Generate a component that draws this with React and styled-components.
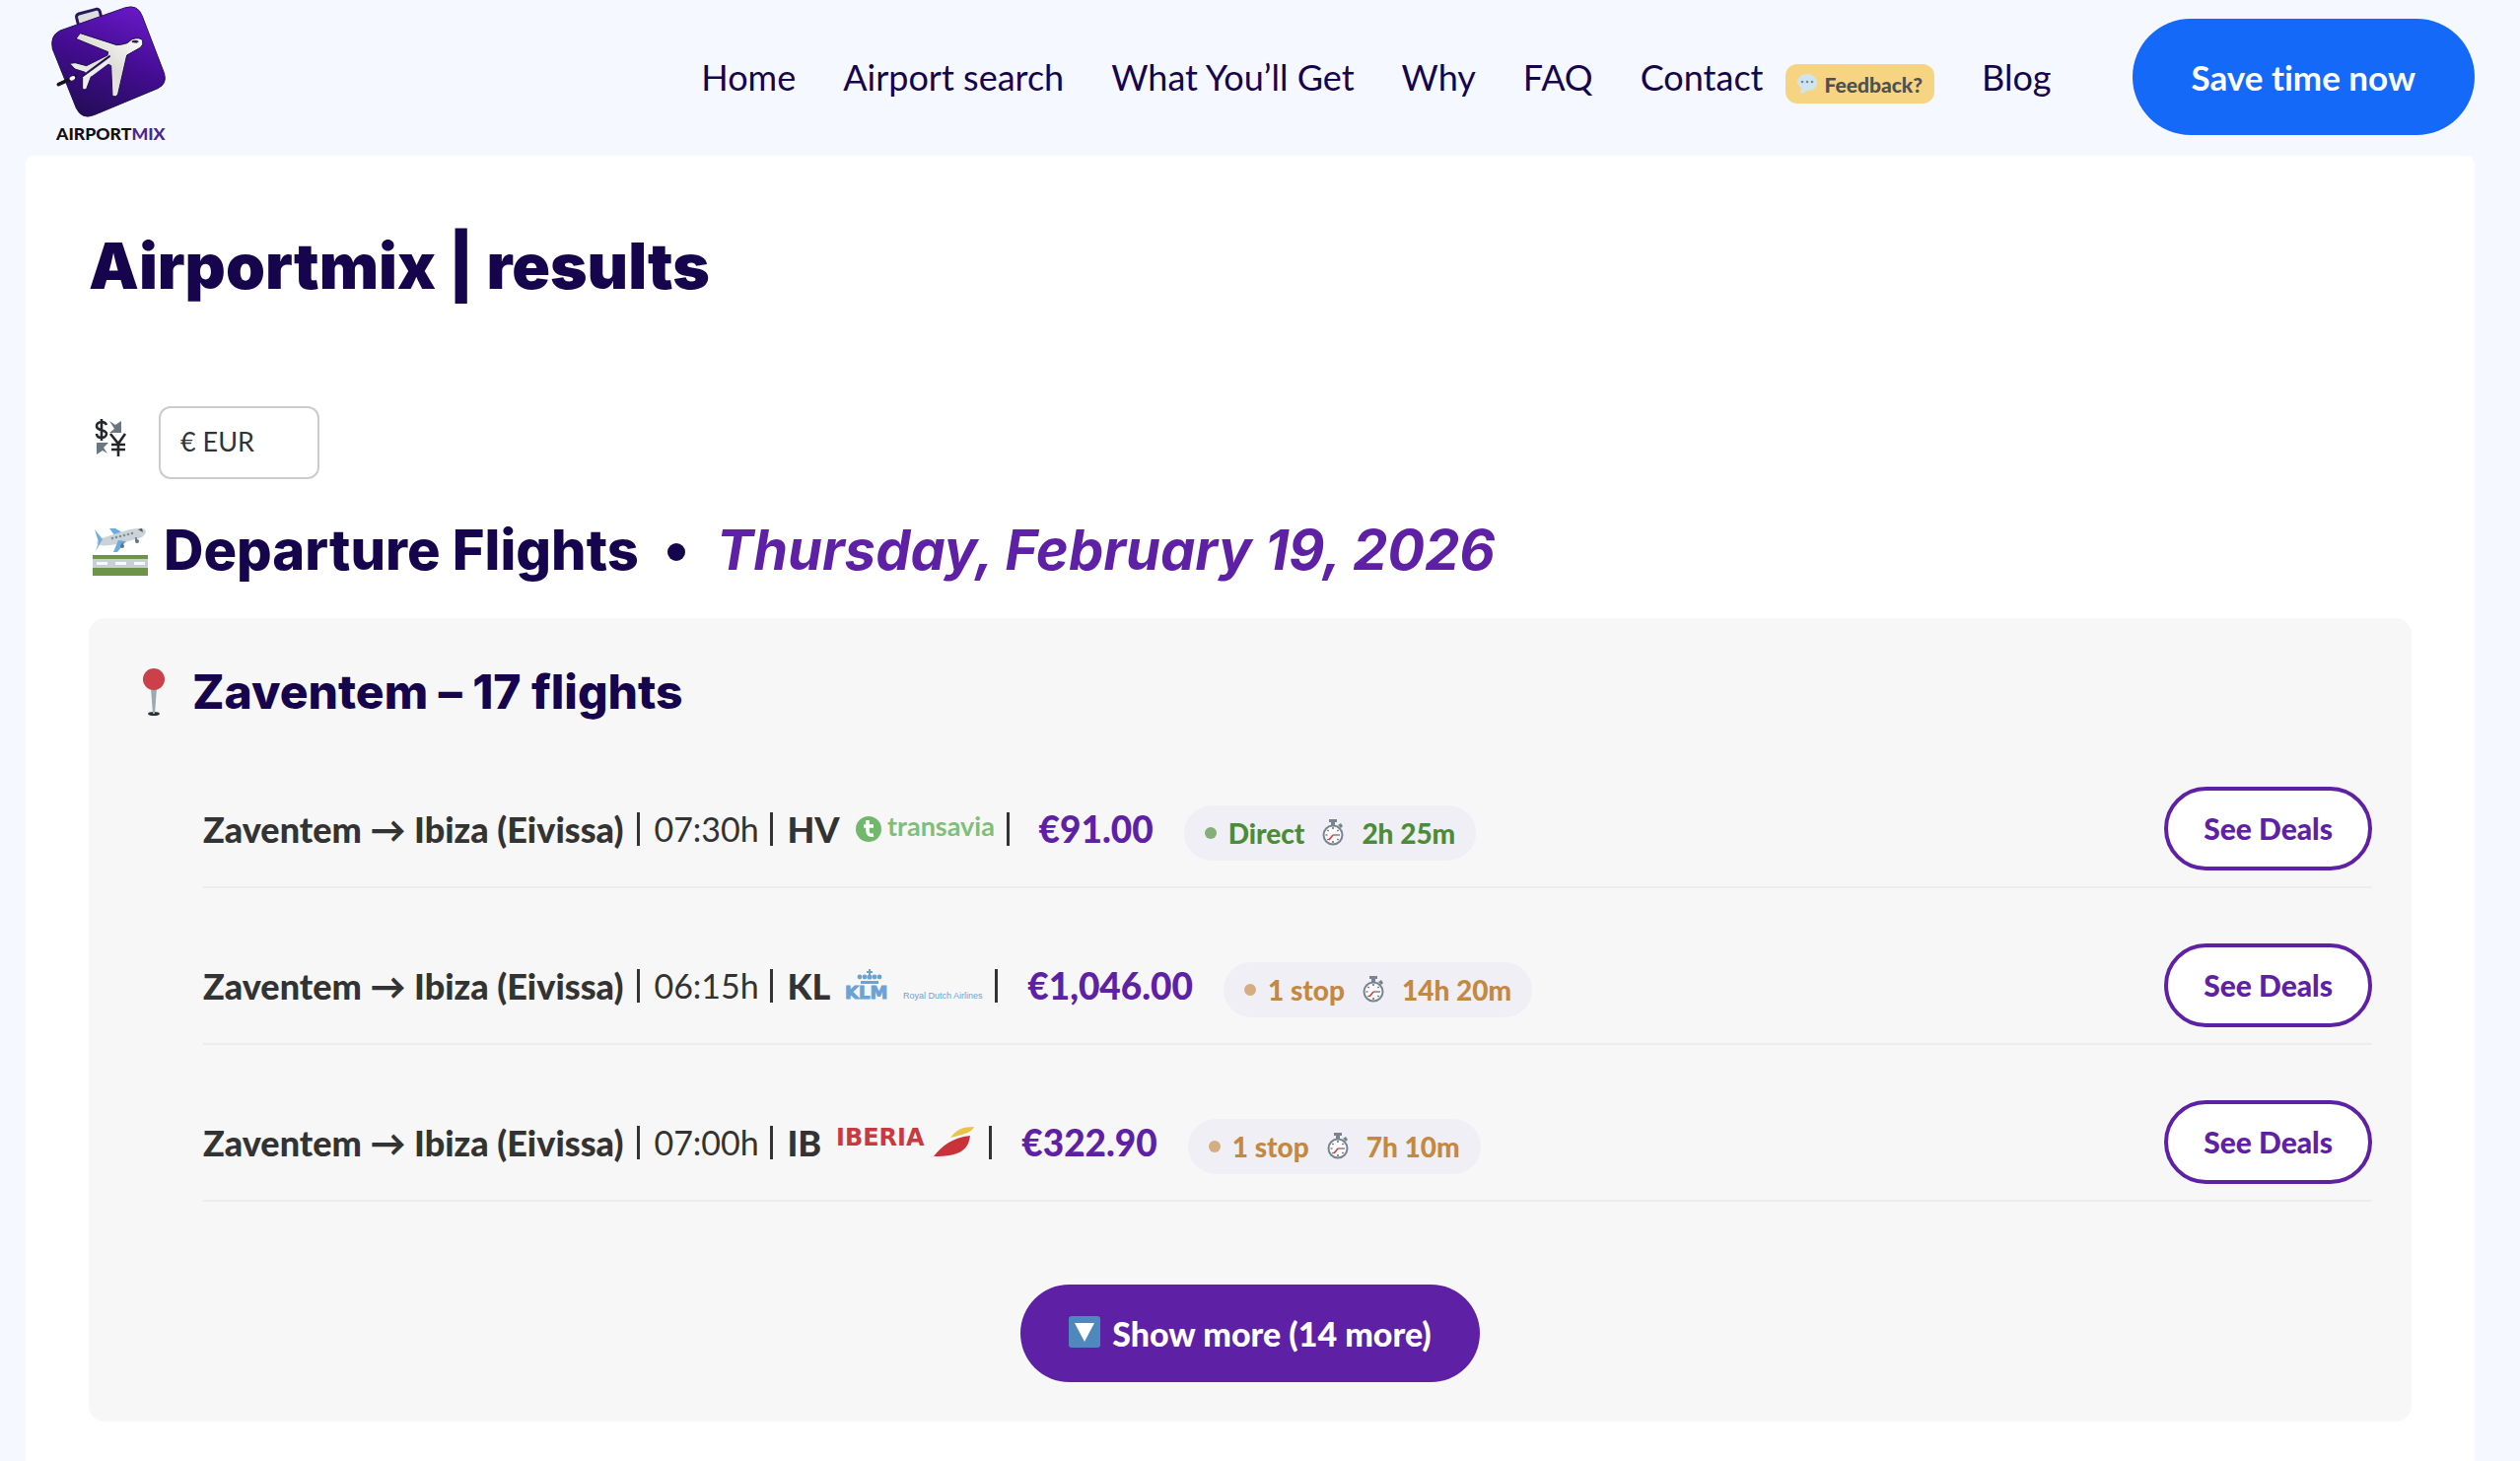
import React, { useState } from 'react'
import styled, { createGlobalStyle } from 'styled-components'

const GlobalStyle = createGlobalStyle`
* { box-sizing: border-box; }
body {
    margin: 0;
    background: #f5f8ff;
    color: #333;
    font-family: 'Lato', sans-serif;
}
body, button { font-variant-ligatures: none; }
svg { overflow: visible; flex: none; }
`

const Header = styled.header`
display: flex;
align-items: center;
height: 158px;
padding: 0 46px 2px 48px;
`

const LogoLink = styled.a`
display: block;
height: 142px;
margin: 0 auto 6px 0;
`

const Nav = styled.nav`
display: flex;
align-items: center;
gap: 48px;
margin-right: 82px;
`

const NavLink = styled.a`
color: #16054d;
font-size: 36px;
line-height: 48px;
text-decoration: none;
white-space: nowrap;
`

const ContactGroup = styled.div`
display: flex;
align-items: center;
gap: 22px;
`

const Feedback = styled.button`
display: flex;
align-items: center;
gap: 8px;
height: 40px;
margin-top: 14px;
padding: 0 12px;
border: 0;
border-radius: 12px;
background: #f6d481;
color: #505050;
font-family: inherit;
font-size: 21px;
font-weight: 900;
`

const SaveButton = styled.button`
height: 118px;
padding: 0 60px;
border: 0;
border-radius: 60px;
background: #1469f8;
color: white;
font-family: inherit;
font-size: 35px;
font-weight: 700;
white-space: nowrap;
`

const Main = styled.main`
margin: 0 46px 0 26px;
padding: 62px 64px 40px;
min-height: calc(100vh - 158px);
border-radius: 8px 8px 0 0;
background: white;
`

const Title = styled.h1`
margin: 0 0 92px;
color: #16054d;
font-family: 'Inter', sans-serif;
font-size: 64px;
font-weight: 900;
line-height: 100px;
`

const Currency = styled.label`
display: flex;
align-items: center;
gap: 33px;
padding-left: 6px;
margin-bottom: 32px;

svg { margin-bottom: 10px; }
`

const Select = styled.select`
appearance: none;
width: 163px;
height: 74px;
padding: 0 20px 4px;
border: 2px solid #ccc;
border-radius: 12px;
background: white;
color: #333;
font-family: inherit;
font-size: 27px;
`

const SectionTitle = styled.h2`
display: flex;
align-items: center;
margin: 0 0 29px;
padding-left: 4px;
color: #16054d;
font-family: 'Inter', sans-serif;
font-size: 56px;
font-weight: 800;
line-height: 80px;
white-space: nowrap;

svg { margin: 4px 16px 0 0; }
`

const Bullet = styled.span`
width: 18px;
height: 18px;
margin: 4px 32px 0 29px;
border-radius: 50%;
background: #16054d;
`

const FlightDate = styled.em`
color: #5e21a5;
font-weight: 700;
`

const Panel = styled.section`
padding: 40px;
border-radius: 16px;
background: #f7f7f7;
`

const AirportTitle = styled.h3`
display: flex;
align-items: center;
gap: 28px;
margin: 0;
padding-left: 15px;
color: #16054d;
font-family: 'Inter', sans-serif;
font-size: 48px;
font-weight: 800;
line-height: 70px;
`

const FlightList = styled.ul`
margin: 31px 0 84px;
padding: 0 0 0 76px;
list-style: none;
`

const FlightRow = styled.li`
display: flex;
align-items: center;
height: 159px;
padding: 42px 0 2px;
border-bottom: 2px solid #ededed;
font-size: 36px;
line-height: 44px;
white-space: nowrap;

&:first-child { height: 133px; padding-top: 16px; }
`

const Route = styled.strong`
min-width: 425px;
font-weight: 900;
`

const Time = styled.span`
width: 104px;
font-size: 34px;
`

const Divider = styled.span`
width: 3px;
height: 34px;
margin: 0 14px;
background: #333;
`

const Code = styled.strong`
margin-right: 15px;
font-weight: 900;
`

const Price = styled.strong`
margin: 0 31px 0 16px;
color: #5e21a5;
font-size: 37px;
font-weight: 900;
`

const Pill = styled.span`
display: flex;
align-items: center;
height: 56px;
margin-top: 8px;
padding: 0 21px;
border-radius: 28px;
background: #f0eff5;
color: ${props => props.$direct ? '#4c8c37' : '#c48840'};
font-size: 28px;
font-weight: 900;

svg { margin: 0 18px; }
`

const Dot = styled.span`
width: 12px;
height: 12px;
margin-right: 12px;
border-radius: 50%;
background: currentColor;
opacity: 0.65;
`

const DealsButton = styled.button`
height: 85px;
margin-left: auto;
padding: 0 36px 2px;
border: 4px solid #5e21a5;
border-radius: 43px;
background: white;
color: #5e21a5;
font-family: inherit;
font-size: 30px;
font-weight: 900;
`

const ShowMore = styled.button`
display: flex;
align-items: center;
gap: 12px;
height: 99px;
margin: 0 auto;
padding: 0 49px;
border: 0;
border-radius: 50px;
background: #5e21a5;
color: white;
font-family: inherit;
font-size: 34px;
font-weight: 900;

svg { margin-bottom: 4px; }
`

const Logo = () => (
    <svg width="124" height="142" viewBox="144 12 372 426" role="img" aria-label="Airportmix">
        <defs>
            <linearGradient id="bag" x1="0.75" y1="0" x2="0.35" y2="1">
                <stop offset="0" stopColor="#6819c8" />
                <stop offset="0.5" stopColor="#430c91" />
                <stop offset="1" stopColor="#240d58" />
            </linearGradient>
            <linearGradient id="jet" x1="1" y1="0" x2="0" y2="1">
                <stop offset="0" stopColor="#fff" />
                <stop offset="0.5" stopColor="#dcdbd6" />
                <stop offset="1" stopColor="#fff" />
            </linearGradient>
        </defs>
        <path d="M240 82 L233 54 Q231 45 240 42 L292 28 Q301 26 304 35 L308 52" fill="#dddde0" stroke="#281a5b" strokeWidth="9" />
        <path d="M183 93 L382 23 Q419 13 432 47 L500 224 Q509 255 480 269 L286 350 Q249 365 232 329 L160 149 Q151 109 183 93Z" fill="url(#bag)" stroke="#251158" strokeWidth="3" />
        <path d="M231 118 L244 101 L355 137 Q373 136 387 131 L402 119 Q426 112 434 123 Q438 136 427 145 L386 168 L359 286 Q355 297 342 292 L338 200 L326 194 L278 231 L264 268 Q258 278 251 268 L251 230 L259 220 L228 210 L212 193 L229 191 L263 200 L327 168 L329 158Z" fill="url(#jet)" stroke="#21104b" strokeWidth="3" />
        <path d="M402 124 Q413 119 423 126 L416 131 L401 129Z" fill="#30205c" />
        <path d="M250 233 L335 170" stroke="#251050" strokeWidth="6" />
        <path d="M251 236 L336 177 L329 194 L279 232Z" fill="#eee" />
        <path d="M178 257 L228 234" stroke="#171120" strokeWidth="11" strokeLinecap="round" />
        <ellipse cx="220" cy="238" rx="9" ry="6" fill="white" transform="rotate(-25 220 238)" />
        <text x="171" y="425" fontFamily="Lato, sans-serif" fontSize="53" fontWeight="900" fill="#111">AIRPORT<tspan fill="#4c2792">MIX</tspan></text>
    </svg>
)

const BubbleIcon = () => (
    <svg width="20" height="20" viewBox="0 0 20 20" aria-hidden="true">
        <path d="M10 0C16 0 20 4 20 9s-4 8-9 8c-3 0-3 3-9 3 2-2 2-4 2-6C1 12 0 10 0 8c0-5 5-8 10-8Z" fill="#d0e4ee" />
        <g fill="#6b8ca5"><circle cx="5" cy="8" r="1.3" /><circle cx="10" cy="8" r="1.3" /><circle cx="15" cy="8" r="1.3" /></g>
    </svg>
)

const ExchangeIcon = () => (
    <svg width="32" height="40" viewBox="0 0 32 40" aria-hidden="true">
        <path d="M12 7C11 4 9 4 7 4 4 4 2 6 2 8c0 6 10 3 10 8 0 3-3 4-5 4-3 0-5-1-5-4M7 1v22" fill="none" stroke="#24282c" strokeWidth="2.6" />
        <path d="M16 16l8 10 7-10M24 25v14M17 27h14M17 32h14" fill="none" stroke="#24282c" strokeWidth="2.6" />
        <path d="M15 3l6 4 6-4v12H15l5-4Z M2 25h12l-5 5 4 6-5-3-6 4Z" fill="#6b7680" />
    </svg>
)

const DepartureIcon = () => (
    <svg width="56" height="48" viewBox="0 0 56 48" aria-hidden="true">
        <path d="M0 27h56v21H0Z" fill="#6d9449" />
        <path d="M0 31h56v9H0Z" fill="#c8d0d5" />
        <path d="M4 34h11v3H4ZM23 34h11v3H23ZM42 34h11v3H42Z" fill="#f7f9fa" />
        <path d="M17 0h6l10 6-10 2Z" fill="#68ade3" />
        <path d="M6 11L31 3C39 0 49-1 53 1c2 3 0 7-6 9L25 16C14 18 5 18 4 15Z" fill="#cbd3d8" />
        <path d="M2 1l8 10-7 12 3-9ZM26 12l8 1-9 11h-4Z" fill="#68ade3" />
        <g fill="#82909a"><circle cx="20" cy="10" r="1.3" /><circle cx="24" cy="9" r="1.3" /><circle cx="28" cy="8" r="1.3" /><circle cx="32" cy="7" r="1.3" /><circle cx="36" cy="6" r="1.3" /><circle cx="40" cy="5" r="1.3" /></g>
        <path d="M46 1l4-1 1 4Z" fill="#4c5661" />
        <path d="M30 14v4M44 9v4" stroke="#7c858d" strokeWidth="2" />
        <circle cx="30" cy="18" r="2" fill="#66727c" /><circle cx="45" cy="13" r="2" fill="#66727c" />
    </svg>
)

const PinIcon = () => (
    <svg width="22" height="48" viewBox="0 0 22 48" aria-hidden="true">
        <ellipse cx="11" cy="46" rx="6" ry="2" fill="#292f33" />
        <path d="M8 20h6l-2 26h-2Z" fill="#9aaab2" />
        <circle cx="11" cy="11" r="11" fill="#cc4149" />
    </svg>
)

const StopwatchIcon = () => (
    <svg width="22" height="27" viewBox="0 0 22 27" aria-hidden="true">
        <path d="M7 0h8v3H7ZM9 3h4v4H9ZM16 6l3-2 2 3-2 2Z" fill="#78858f" />
        <circle cx="11" cy="16" r="9.5" fill="#fafafa" stroke="#78858f" strokeWidth="2" />
        <path d="M11 8v2M11 22v2M3.5 16h2M5.5 11l1 1M5.5 21l1-1M16.5 11l-1 1M16.5 21l-1-1M11 16h7" stroke="#444b50" strokeWidth="1.2" />
        <path d="M11 16l-4 5" stroke="#d3343d" strokeWidth="1.4" />
    </svg>
)

const DownIcon = () => (
    <svg width="32" height="32" viewBox="0 0 32 32" aria-hidden="true">
        <rect width="32" height="32" rx="3" fill="#4f88bd" />
        <path d="M6 7h20L16 26Z" fill="white" />
    </svg>
)

const TransaviaLogo = () => (
    <svg width="140" height="36" viewBox="0 0 140 36" role="img" aria-label="Transavia">
        <circle cx="14" cy="18" r="13" fill="#71b86c" />
        <path d="M13 9v11q0 5 6 4M9 15h10" fill="none" stroke="white" strokeWidth="3.5" />
        <text x="33" y="25" fontFamily="Lato, sans-serif" fontSize="27" fontWeight="700" fill="#7fbf7a">transavia</text>
    </svg>
)

const KlmLogo = () => (
    <svg width="138" height="36" viewBox="0 0 138 36" role="img" aria-label="KLM Royal Dutch Airlines">
        <g fill="#6ca2d5">
            <path d="M16 13h18v3H16ZM24 1h2v2h2v2h-2v3h-2V5h-2V3h2Z" />
            <circle cx="15" cy="9" r="2.4" /><circle cx="20" cy="9" r="2.4" /><circle cx="25" cy="9" r="2.6" /><circle cx="30" cy="9" r="2.4" /><circle cx="35" cy="9" r="2.4" />
            <text x="0" y="31" fontFamily="DejaVu Sans, sans-serif" fontSize="18" fontWeight="700" stroke="#6ca2d5" strokeWidth="1">KLM</text>
            <text x="59" y="31" fontFamily="Liberation Sans, sans-serif" fontSize="9">Royal Dutch Airlines</text>
        </g>
    </svg>
)

const IberiaLogo = () => (
    <svg width="141" height="36" viewBox="0 0 141 36" role="img" aria-label="Iberia">
        <text x="0" y="21" fontFamily="DejaVu Sans, sans-serif" fontSize="24" fontWeight="700" fill="#c93a40">IBERIA</text>
        <path d="M99 32C107 22 117 13 136 11C134 25 127 32 99 32Z" fill="#c9313b" />
        <path d="M116 13C122 5 128 2 140 2C137 8 132 9 116 13Z" fill="#ecc34a" />
    </svg>
)

const flights = [
    { time: '07:30h', code: 'HV', Airline: TransaviaLogo, price: '€91.00', stops: 'Direct', duration: '2h 25m' },
    { time: '06:15h', code: 'KL', Airline: KlmLogo, price: '€1,046.00', stops: '1 stop', duration: '14h 20m' },
    { time: '07:00h', code: 'IB', Airline: IberiaLogo, price: '€322.90', stops: '1 stop', duration: '7h 10m' },
]

const Flight = ({ time, code, Airline, price, stops, duration }) => (
    <FlightRow>
        <Route>Zaventem → Ibiza (Eivissa)</Route>
        <Divider />
        <Time>{time}</Time>
        <Divider />
        <Code>{code}</Code>
        <Airline />
        <Divider />
        <Price>{price}</Price>
        <Pill $direct={stops === 'Direct'}>
            <Dot />{stops}<StopwatchIcon />{duration}
        </Pill>
        <DealsButton>See Deals</DealsButton>
    </FlightRow>
)

export default function App() {

    const [currency, setCurrency] = useState('EUR')

    return (
        <>
            <GlobalStyle />
            <Header>
                <LogoLink href="#"><Logo /></LogoLink>
                <Nav>
                    <NavLink href="#">Home</NavLink>
                    <NavLink href="#">Airport search</NavLink>
                    <NavLink href="#">What You’ll Get</NavLink>
                    <NavLink href="#">Why</NavLink>
                    <NavLink href="#">FAQ</NavLink>
                    <ContactGroup>
                        <NavLink href="#">Contact</NavLink>
                        <Feedback><BubbleIcon />Feedback?</Feedback>
                    </ContactGroup>
                    <NavLink href="#">Blog</NavLink>
                </Nav>
                <SaveButton>Save time now</SaveButton>
            </Header>
            <Main>
                <Title>Airportmix | results</Title>
                <Currency>
                    <ExchangeIcon />
                    <Select aria-label="Currency" value={currency} onChange={e => setCurrency(e.target.value)}>
                        <option value="EUR">€ EUR</option>
                    </Select>
                </Currency>
                <SectionTitle>
                    <DepartureIcon />
                    Departure Flights
                    <Bullet />
                    <FlightDate>Thursday, February 19, 2026</FlightDate>
                </SectionTitle>
                <Panel>
                    <AirportTitle><PinIcon />Zaventem – 17 flights</AirportTitle>
                    <FlightList>
                        {flights.map(flight => <Flight key={flight.code} {...flight} />)}
                    </FlightList>
                    <ShowMore><DownIcon />Show more (14 more)</ShowMore>
                </Panel>
            </Main>
        </>
    )
}
